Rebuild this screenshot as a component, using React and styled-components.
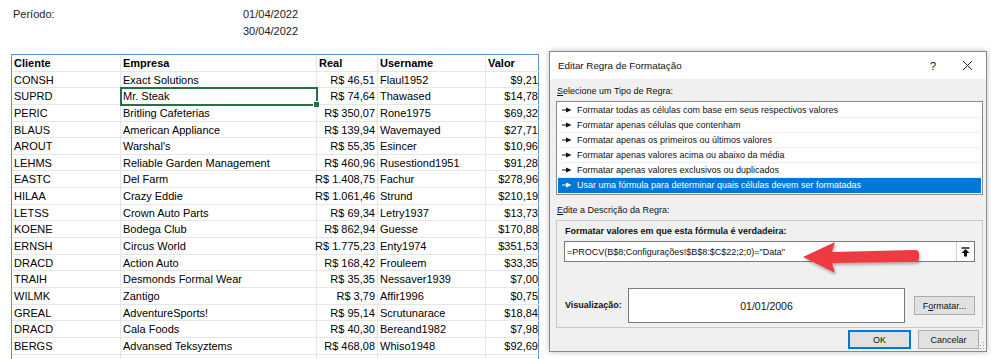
import styled, { createGlobalStyle } from 'styled-components';

const GlobalStyle = createGlobalStyle`
  html, body { margin: 0; padding: 0; background: #fff; }
  * { box-sizing: border-box; }
`;

const rows = [
  ['CONSH', 'Exact Solutions', 'R$ 46,51', 'Flaul1952', '$9,21'],
  ['SUPRD', 'Mr. Steak', 'R$ 74,64', 'Thawased', '$14,78'],
  ['PERIC', 'Britling Cafeterias', 'R$ 350,07', 'Rone1975', '$69,32'],
  ['BLAUS', 'American Appliance', 'R$ 139,94', 'Wavemayed', '$27,71'],
  ['AROUT', "Warshal's", 'R$ 55,35', 'Esincer', '$10,96'],
  ['LEHMS', 'Reliable Garden Management', 'R$ 460,96', 'Rusestiond1951', '$91,28'],
  ['EASTC', 'Del Farm', 'R$ 1.408,75', 'Fachur', '$278,96'],
  ['HILAA', 'Crazy Eddie', 'R$ 1.061,46', 'Strund', '$210,19'],
  ['LETSS', 'Crown Auto Parts', 'R$ 69,34', 'Letry1937', '$13,73'],
  ['KOENE', 'Bodega Club', 'R$ 862,94', 'Guesse', '$170,88'],
  ['ERNSH', 'Circus World', 'R$ 1.775,23', 'Enty1974', '$351,53'],
  ['DRACD', 'Action Auto', 'R$ 168,42', 'Frouleem', '$33,35'],
  ['TRAIH', 'Desmonds Formal Wear', 'R$ 35,35', 'Nessaver1939', '$7,00'],
  ['WILMK', 'Zantigo', 'R$ 3,79', 'Affir1996', '$0,75'],
  ['GREAL', 'AdventureSports!', 'R$ 95,14', 'Scrutunarace', '$18,84'],
  ['DRACD', 'Cala Foods', 'R$ 40,30', 'Bereand1982', '$7,98'],
  ['BERGS', 'Advansed Teksyztems', 'R$ 468,08', 'Whiso1948', '$92,69'],
  ['', '', '', '', ''],
];

const ruleTypes = [
  'Formatar todas as células com base em seus respectivos valores',
  'Formatar apenas células que contenham',
  'Formatar apenas os primeiros ou últimos valores',
  'Formatar apenas valores acima ou abaixo da média',
  'Formatar apenas valores exclusivos ou duplicados',
  'Usar uma fórmula para determinar quais células devem ser formatadas',
];

const App = () => {
  return (
    <Page>
      <GlobalStyle />
      <Sheet>
        <Period>
          <PeriodLabel>Período:</PeriodLabel>
          <PeriodDates>
            <span>01/04/2022</span>
            <span>30/04/2022</span>
          </PeriodDates>
        </Period>
        <Table>
          <Cell $head>Cliente</Cell>
          <Cell $head>Empresa</Cell>
          <Cell $head>Real</Cell>
          <Cell $head>Username</Cell>
          <Cell $head>Valor</Cell>
          {rows.map((r, i) => (
            <Row key={i}>
              <Cell>{r[0]}</Cell>
              <Cell $selected={i === 1}>{r[1]}</Cell>
              <Cell $right>{r[2]}</Cell>
              <Cell>{r[3]}</Cell>
              <Cell $right>{r[4]}</Cell>
            </Row>
          ))}
        </Table>
      </Sheet>

      <DialogArea>
        <Dialog>
          <TitleBar>
            <span>Editar Regra de Formatação</span>
            <TitleButtons>
              <span>?</span>
              <svg width="11" height="11" viewBox="0 0 11 11">
                <path d="M1 1 L10 10 M10 1 L1 10" stroke="#222" strokeWidth="1" />
              </svg>
            </TitleButtons>
          </TitleBar>
          <Body>
            <Label><u>S</u>elecione um Tipo de Regra:</Label>
            <ListBox>
              {ruleTypes.map((t, i) => (
                <ListItem key={i} $active={i === ruleTypes.length - 1}>
                  <svg width="10" height="6" viewBox="0 0 10 6">
                    <path d="M0 3 H5" stroke="currentColor" strokeWidth="1" />
                    <path d="M4 0.5 L9.5 3 L4 5.5 Z" fill="currentColor" />
                  </svg>
                  {t}
                </ListItem>
              ))}
            </ListBox>
            <Label $gap><u>E</u>dite a Descrição da Regra:</Label>
            <Group>
              <BoldLabel>Formatar valores em que esta fórmula é verdadeira:</BoldLabel>
              <FormulaInput>
                <span>=PROCV(B$8;Configurações!$B$8:$C$22;2;0)="Data"</span>
                <CollapseButton>
                  <svg width="9" height="10" viewBox="0 0 9 10">
                    <path d="M0.5 1 H8.5" stroke="#111" strokeWidth="1.4" />
                    <path d="M4.5 2 L8.5 6 H6 V9.5 H3 V6 H0.5 Z" fill="#111" />
                  </svg>
                </CollapseButton>
              </FormulaInput>
              <PreviewRow>
                <BoldLabel>Visualização:</BoldLabel>
                <Preview>01/01/2006</Preview>
                <Button $w={61}>F<u>o</u>rmatar...</Button>
              </PreviewRow>
            </Group>
            <Footer>
              <Button $w={63} $default>OK</Button>
              <Button $w={61}>Cancelar</Button>
            </Footer>
            <Grip viewBox="0 0 8 8" width="8" height="8">
              <rect x="6" y="6" width="1" height="1" fill="#999" />
              <rect x="3" y="6" width="1" height="1" fill="#999" />
              <rect x="6" y="3" width="1" height="1" fill="#999" />
              <rect x="0" y="6" width="1" height="1" fill="#999" />
              <rect x="3" y="3" width="1" height="1" fill="#999" />
              <rect x="6" y="0" width="1" height="1" fill="#999" />
            </Grip>
          </Body>
          <Arrow width="124" height="40" viewBox="0 0 124 40">
            <defs>
              <filter id="sh" x="-20%" y="-40%" width="140%" height="180%">
                <feDropShadow dx="1" dy="2" stdDeviation="1.5" floodColor="#000" floodOpacity="0.3" />
              </filter>
            </defs>
            <path
              d="M4 19 L36 4 L33 14 L116 12 Q120 12 120 16 L120 20 Q120 24 116 24 L33 25 L36 35 Z"
              fill="#ee3b43"
              filter="url(#sh)"
            />
          </Arrow>
        </Dialog>
      </DialogArea>
    </Page>
  );
};

export default App;

const Page = styled.div`
  width: 991px;
  height: 359px;
  overflow: hidden;
  display: flex;
  background: #fff;
`;

const Sheet = styled.div`
  width: 549px;
  flex-shrink: 0;
  font-family: 'Liberation Sans', Arial, sans-serif;
  font-size: 11px;
  color: #000;
`;

const Period = styled.div`
  display: flex;
  padding: 6px 0 0 13px;
  height: 54px;
`;

const PeriodLabel = styled.div`
  width: 230px;
  line-height: 16.5px;
  color: #222;
`;

const PeriodDates = styled.div`
  display: flex;
  flex-direction: column;
  line-height: 16.5px;
  color: #222;
`;

const Table = styled.div`
  margin-left: 11px;
  width: 528px;
  display: grid;
  grid-template-columns: 109px 196px 61px 108px 54px;
  border: 1px solid #5b8fd6;
  border-bottom: none;
`;

const Row = styled.div`
  display: contents;
`;

const Cell = styled.div`
  position: relative;
  height: 16.65px;
  line-height: 16px;
  padding: 0 2px;
  white-space: nowrap;
  display: flex;
  justify-content: ${(p) => (p.$right ? 'flex-end' : 'flex-start')};
  border-right: 1px solid #e6e6e6;
  border-bottom: 1px solid #e6e6e6;
  font-weight: ${(p) => (p.$head ? 700 : 400)};
  &:nth-child(5n) { border-right: none; }
  ${(p) =>
    p.$selected &&
    `
    outline: 2px solid #217346;
    outline-offset: -1px;
    z-index: 1;
    &::after {
      content: '';
      position: absolute;
      right: -4px;
      bottom: -4px;
      width: 5px;
      height: 5px;
      background: #217346;
      border: 1px solid #fff;
    }
  `}
`;

const DialogArea = styled.div`
  padding-top: 51px;
`;

const Dialog = styled.div`
  position: relative;
  width: 438px;
  height: 301px;
  border: 1px solid #8a8a8a;
  box-shadow: 0 0 6px rgba(0, 0, 0, 0.25);
  background: #f0f0f0;
  font-family: 'Liberation Sans', Arial, sans-serif;
  font-size: 9px;
  color: #111;
  display: flex;
  flex-direction: column;
`;

const TitleBar = styled.div`
  height: 27px;
  background: #fff;
  display: flex;
  align-items: center;
  justify-content: space-between;
  padding: 0 13px 0 8px;
  font-size: 9.8px;
`;

const TitleButtons = styled.div`
  display: flex;
  align-items: center;
  gap: 26px;
  font-size: 11px;
`;

const Body = styled.div`
  position: relative;
  flex: 1;
  padding: 5px 4px 0 6px;
  display: flex;
  flex-direction: column;
`;

const Label = styled.div`
  height: 15px;
  line-height: 15px;
  margin-top: ${(p) => (p.$gap ? '8px' : '0')};
  padding-left: 1px;
`;

const ListBox = styled.div`
  margin-top: 2px;
  width: 427px;
  height: 94px;
  border: 1px solid #8c8c8c;
  background: #fff;
  padding: 1px;
`;

const ListItem = styled.div`
  height: 15px;
  display: flex;
  align-items: center;
  gap: 5px;
  padding-left: 4px;
  border-bottom: 1px solid ${(p) => (p.$active ? '#0078d7' : '#efefef')};
  background: ${(p) => (p.$active ? '#0078d7' : '#fff')};
  color: ${(p) => (p.$active ? '#fff' : '#111')};
`;

const Group = styled.div`
  margin-top: 2px;
  width: 427px;
  height: 108px;
  border: 1px solid #c8c8c8;
  padding: 3px 7px 0 7px;
  display: flex;
  flex-direction: column;
`;

const BoldLabel = styled.div`
  font-weight: 700;
  line-height: 15px;
  padding-left: 1px;
`;

const FormulaInput = styled.div`
  margin-top: 2px;
  height: 21px;
  border: 1px solid #7a7a7a;
  background: #fff;
  display: flex;
  align-items: center;
  justify-content: space-between;
  padding-left: 2px;
  font-size: 9px;
`;

const CollapseButton = styled.div`
  width: 18px;
  height: 19px;
  border-left: 1px solid #d0d0d0;
  display: flex;
  align-items: center;
  justify-content: center;
`;

const PreviewRow = styled.div`
  margin-top: 26px;
  display: flex;
  align-items: center;
  & > ${BoldLabel} { width: 64px; }
`;

const Preview = styled.div`
  width: 277px;
  height: 35px;
  border: 1px solid #7a7a7a;
  background: #fff;
  display: flex;
  align-items: center;
  justify-content: center;
  font-size: 10.5px;
  margin-right: 9px;
`;

const Button = styled.div`
  width: ${(p) => p.$w}px;
  height: 19px;
  border: 1px solid ${(p) => (p.$default ? '#0078d7' : '#adadad')};
  box-shadow: ${(p) => (p.$default ? 'inset 0 0 0 1px #0078d7' : 'none')};
  background: #e1e1e1;
  display: flex;
  align-items: center;
  justify-content: center;
`;

const Footer = styled.div`
  margin-top: 2px;
  display: flex;
  justify-content: flex-end;
  gap: 7px;
  padding-right: 3px;
`;

const Grip = styled.svg`
  position: absolute;
  right: 1px;
  bottom: 1px;
`;

const Arrow = styled.svg`
  position: absolute;
  left: 249px;
  top: 186px;
`;
